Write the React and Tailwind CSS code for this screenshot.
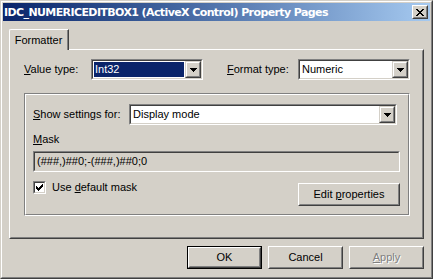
import React from "react";

const FONT = "font-['Liberation_Sans',Arial,sans-serif]";

// win2000 bevel edges
const FRAME_OUT = "border-t-[#d4d0c8] border-l-[#d4d0c8] border-r-[#404040] border-b-[#404040]";
const FRAME_IN = "border-t-white border-l-white border-r-[#808080] border-b-[#808080]";
const BTN_OUT = "border-t-white border-l-white border-r-[#404040] border-b-[#404040]";
const BTN_IN = "border-t-[#d4d0c8] border-l-[#d4d0c8] border-r-[#808080] border-b-[#808080]";
const SUNK_OUT = "border-t-[#808080] border-l-[#808080] border-r-white border-b-white";
const SUNK_IN = "border-t-[#404040] border-l-[#404040] border-r-[#d4d0c8] border-b-[#d4d0c8]";

function Pixels({ rows, className = "" }) {
  const w = rows[0].length;
  const h = rows.length;
  const rects = [];
  rows.forEach((row, y) =>
    row.split("").forEach((c, x) => {
      if (c === "X") rects.push(<rect key={x + "-" + y} x={x} y={y} width="1" height="1" />);
    })
  );
  return (
    <svg width={w} height={h} viewBox={`0 0 ${w} ${h}`} fill="currentColor" shapeRendering="crispEdges" className={className}>
      {rects}
    </svg>
  );
}

const CLOSE_X = ["XX....XX", ".XX..XX.", "..XXXX..", "...XX...", "..XXXX..", ".XX..XX.", "XX....XX"];
const ARROW = ["XXXXXXX", ".XXXXX.", "..XXX..", "...X..."];
const CHECK = ["......X", ".....XX", "X...XXX", "XX.XXX.", "XXXXX..", ".XXX...", "..X...."];

function DropButton() {
  return (
    <div className={`w-[16px] h-[17px] border ${FRAME_OUT} flex`}>
      <div className={`flex-1 border ${FRAME_IN} bg-[#d4d0c8] flex items-center justify-center`}>
        <Pixels rows={ARROW} className="text-black" />
      </div>
    </div>
  );
}

function Combo({ value, className = "", selected = false }) {
  return (
    <div className={`h-[21px] border ${SUNK_OUT} flex ${className}`}>
      <div className={`flex-1 border ${SUNK_IN} bg-white flex`}>
        <div className="flex-1 p-px flex">
          <div className={`flex-1 flex items-center pl-[1px] ${selected ? "bg-[#0a246a] text-white" : "text-black"}`}>
            {value}
          </div>
        </div>
        <DropButton />
      </div>
    </div>
  );
}

function Button({ children, className = "", isDefault = false, disabled = false }) {
  return (
    <div className={`h-[23px] flex ${isDefault ? "border border-black" : ""} ${className}`}>
      <div className={`flex-1 border ${BTN_OUT} flex`}>
        <div className={`flex-1 border ${BTN_IN} flex items-center justify-center ${disabled ? "text-[#808080] [text-shadow:1px_1px_0_#fff]" : "text-black"}`}>
          <span>{children}</span>
        </div>
      </div>
    </div>
  );
}

export default function App() {
  return (
    <div className={`w-[433px] h-[279px] bg-[#d4d0c8] border ${FRAME_OUT} flex ${FONT} text-[11px] leading-none`}>
      <div className={`flex-1 border ${FRAME_IN} p-px flex flex-col`}>
        {/* title bar */}
        <div className="h-[18px] bg-gradient-to-r from-[#0a246a] to-[#a6caf0] flex items-center pl-[1px] pr-[2px]">
          <span className="flex-1 text-white font-bold text-[11px] font-['DejaVu_Sans',sans-serif] tracking-[-0.6px] whitespace-nowrap">
            IDC_NUMERICEDITBOX1 (ActiveX Control) Property Pages
          </span>
          <div className={`w-[16px] h-[14px] border ${BTN_OUT} flex`}>
            <div className={`flex-1 border ${BTN_IN} bg-[#d4d0c8] flex items-center justify-center`}>
              <Pixels rows={CLOSE_X} className="text-black" />
            </div>
          </div>
        </div>

        {/* client */}
        <div className="flex-1 flex flex-col px-[6px] pt-[8px]">
          <div className="flex">
            <div className="relative z-10 -mb-px w-[60px] h-[21px] border border-b-0 border-t-white border-l-white border-r-[#404040] rounded-tl-[2px] bg-[#d4d0c8] flex">
              <div className="flex-1 border-r border-r-[#808080] flex items-start justify-center pt-[5px] text-black">
                Formatter
              </div>
            </div>
          </div>

          <div className={`h-[190px] border ${BTN_OUT} flex`}>
            <div className={`flex-1 border ${BTN_IN} pl-[13px] pt-[8px] flex flex-col`}>
              {/* type row */}
              <div className="flex items-center h-[21px]">
                <span className="w-[67px] text-black"><u>V</u>alue type:</span>
                <Combo value="Int32" selected className="w-[112px]" />
                <span className="w-[24px]" />
                <span className="w-[71px] text-black"><u>F</u>ormat type:</span>
                <Combo value="Numeric" className="w-[112px]" />
              </div>

              {/* settings group */}
              <div className={`mt-[13px] w-[386px] h-[123px] border ${SUNK_OUT} flex`}>
                <div className="flex-1 border border-t-white border-l-white border-r-[#808080] border-b-[#808080] pl-[7px] pt-[9px] flex flex-col">
                  <div className="flex items-center h-[21px]">
                    <span className="w-[96px] text-black"><u>S</u>how settings for:</span>
                    <Combo value="Display mode" className="w-[268px]" />
                  </div>
                  <div className="mt-[8px] h-[13px] flex items-center text-black">
                    <span><u>M</u>ask</span>
                  </div>
                  <div className={`mt-[5px] w-[367px] h-[21px] border ${SUNK_OUT} flex`}>
                    <div className={`flex-1 border ${SUNK_IN} bg-[#d4d0c8] flex items-center pl-[2px] text-black`}>
                      (###,)##0;-(###,)##0;0
                    </div>
                  </div>
                  <div className="mt-[9px] w-[367px] flex justify-between items-start">
                    <div className="flex items-center gap-[6px] h-[13px]">
                      <div className={`w-[13px] h-[13px] border ${SUNK_OUT} flex`}>
                        <div className={`flex-1 border ${SUNK_IN} bg-white flex items-center justify-center`}>
                          <Pixels rows={CHECK} className="text-black" />
                        </div>
                      </div>
                      <span className="text-black">Use <u>d</u>efault mask</span>
                    </div>
                    <Button className="mt-[2px] w-[102px]">Edit <u>p</u>roperties</Button>
                  </div>
                </div>
              </div>
            </div>
          </div>

          {/* dialog buttons */}
          <div className="mt-[7px] flex justify-end gap-[6px]">
            <Button isDefault className="w-[75px]">OK</Button>
            <Button className="w-[75px]">Cancel</Button>
            <Button disabled className="w-[75px]"><u>A</u>pply</Button>
          </div>
        </div>
      </div>
    </div>
  );
}
